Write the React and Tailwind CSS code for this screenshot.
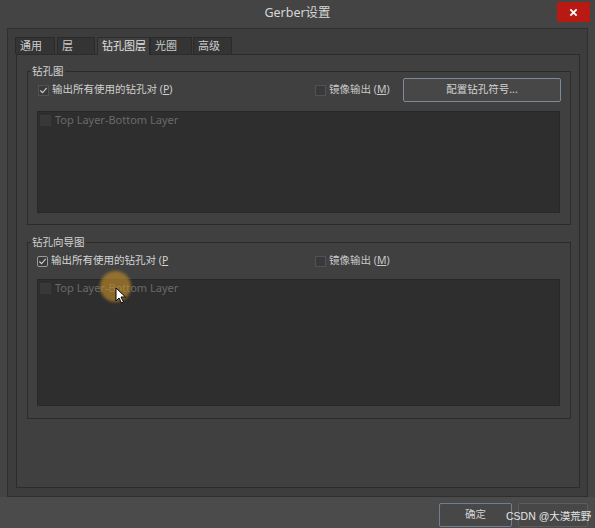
import React from 'react'

const cjk = { fontFamily: '"Noto Sans", "Noto Sans CJK SC", sans-serif' }

function Check({ checked, focus, dim }) {
  let cls = 'w-[11px] h-[11px] flex items-center justify-center shrink-0 '
  if (dim) cls += 'bg-[#383838] border border-[#3a3a3a]'
  else if (focus) cls += 'bg-[#3a3a3a] border border-[#9a9a9a] rounded-[2px]'
  else cls += 'bg-[#393939] border border-[#525252]'
  return (
    <div className={cls}>
      {checked && (
        <svg width="9" height="9" viewBox="0 0 10 10">
          <polyline points="1.5,5 4,7.5 8.5,2" fill="none" stroke="#cfcfcf" strokeWidth="1.3" />
        </svg>
      )}
    </div>
  )
}

function Tab({ label, w, active, className = '' }) {
  return (
    <div
      className={
        'shrink-0 whitespace-nowrap overflow-hidden h-[17px] px-[4px] text-[11px] leading-[16px] border border-b-0 ' +
        (active
          ? 'bg-[#404040] border-[#2c2c2c] text-[#e0e0e0] h-[18px] -mb-px relative z-10'
          : 'bg-[#343434] border-[#2a2a2a] text-[#cccccc]') +
        ' ' + className
      }
      style={{ width: w }}
    >
      {label}
    </div>
  )
}

function Group({ title, children, className = '' }) {
  return (
    <fieldset className={'border border-[#2b2b2b] ' + className}>
      <legend className="ml-[3px] px-[1px] text-[10.5px] leading-[14px] text-[#d2d2d2]">{title}</legend>
      {children}
    </fieldset>
  )
}

function LayerList({ h, className = '' }) {
  return (
    <div className={'ml-[9px] mr-[10px] bg-[#2e2e2e] border border-[#282828] ' + className} style={{ height: h }}>
      <div className="flex items-center gap-[4px] pl-[2px] pt-[1px] h-[14px] box-content">
        <Check dim />
        <span className="text-[11px] text-[#6a6a6a] leading-[14px]">Top Layer-Bottom Layer</span>
      </div>
    </div>
  )
}

function MirrorBox() {
  return (
    <div className="w-[88px] flex items-center gap-[3px]">
      <Check />
      <span className="text-[10.5px] text-[#c8c8c8]">镜像输出 (<span className="underline">M</span>)</span>
    </div>
  )
}

export default function App() {
  return (
    <div className="relative w-[595px] h-[528px] bg-[#444444] flex flex-col overflow-hidden select-none" style={cjk}>
      {/* title bar */}
      <div className="h-[28px] grid grid-cols-[1fr_auto_1fr] items-start shrink-0">
        <div />
        <div className="pt-[5px] text-[12.5px] text-[#d6d6d6] leading-[16px]">Gerber设置</div>
        <div className="flex justify-end pr-[5px] pt-[2px]">
          <div className="w-[33px] h-[20px] bg-[#b81a13] flex items-center justify-center">
            <svg width="9" height="9" viewBox="0 0 10 10">
              <path d="M1.5 1.5 L8.5 8.5 M8.5 1.5 L1.5 8.5" stroke="#ffffff" strokeWidth="2" />
            </svg>
          </div>
        </div>
      </div>

      {/* outer frame */}
      <div className="mx-[7px] h-[469px] shrink-0 border border-[#2f2f2f] bg-[#3d3d3d] pt-[8px] pl-[8px] pr-[7px] pb-[8px] flex flex-col">
        <div className="flex items-end h-[17px] -ml-px">
          <Tab label="通用" w={40} />
          <Tab label="层" w={38} className="ml-[2px]" />
          <Tab label="钻孔图层" w={53} active className="ml-[2px]" />
          <Tab label="光圈" w={42} />
          <Tab label="高级" w={39} className="ml-px" />
        </div>
        <div className="flex-1 border border-[#2c2c2c] bg-[#404040] pt-[9px] pl-[10px] pr-[8px]">
          <Group title="钻孔图">
            <div className="h-[24px] flex items-center pl-[10px] pr-[9px]">
              <div className="flex-1 flex items-center gap-[3px]">
                <Check checked />
                <span className="text-[10.5px] text-[#cfcfcf]">输出所有使用的钻孔对 (<span className="underline">P</span>)</span>
              </div>
              <MirrorBox />
              <div className="w-[158px] h-[24px] border border-[#7e8a96] rounded-[2px] bg-[#474747] flex items-center justify-center text-[10.5px] text-[#d2d2d2]">
                配置钻孔符号...
              </div>
            </div>
            <LayerList h={102} className="mt-[9px] mb-[11px]" />
          </Group>

          <Group title="钻孔向导图" className="mt-[10px]">
            <div className="h-[24px] flex items-center pl-[9px] pr-[9px]">
              <div className="flex-1 flex items-center gap-[3px]">
                <Check checked focus />
                <span className="text-[10.5px] text-[#d4d4d4]">输出所有使用的钻孔对 (<span className="underline">P</span></span>
              </div>
              <MirrorBox />
              <div className="w-[158px]" />
            </div>
            <LayerList h={127} className="mt-[6px] mb-[12px]" />
          </Group>
        </div>
      </div>

      {/* bottom buttons */}
      <div className="flex-1 bg-[#4b4b4b] flex justify-end items-start gap-[6px] pt-[6px] pr-[7px]">
        <div className="w-[73px] h-[24px] border border-[#6f7f8e] rounded-[2px] bg-[#474747] flex items-center justify-center text-[10.5px] text-[#d2d2d2]">
          确定
        </div>
        <div className="w-[70px] h-[24px] border border-[#5c5c5c] rounded-[2px] bg-[#474747]" />
      </div>

      {/* watermark overlay */}
      <div className="absolute left-[506px] top-[508px] text-[10.5px] leading-[16px] text-[#e4e4e4] whitespace-nowrap" style={{ fontFamily: '"Liberation Sans", "Noto Sans CJK SC", sans-serif' }}>
        CSDN @大漠荒野
      </div>

      {/* mouse highlight + cursor overlay */}
      <div className="absolute left-[100px] top-[271px] w-[31px] h-[31px] rounded-full bg-[#c8912a]/60 blur-[1.5px]" />
      <svg className="absolute left-[115px] top-[287px]" width="12" height="17" viewBox="0 0 12 17">
        <path d="M1 1 L1 14 L4 11 L6.5 16 L8.5 15 L6 10 L10.5 10 Z" fill="#ffffff" stroke="#000000" strokeWidth="1" strokeLinejoin="round" />
      </svg>
    </div>
  )
}
